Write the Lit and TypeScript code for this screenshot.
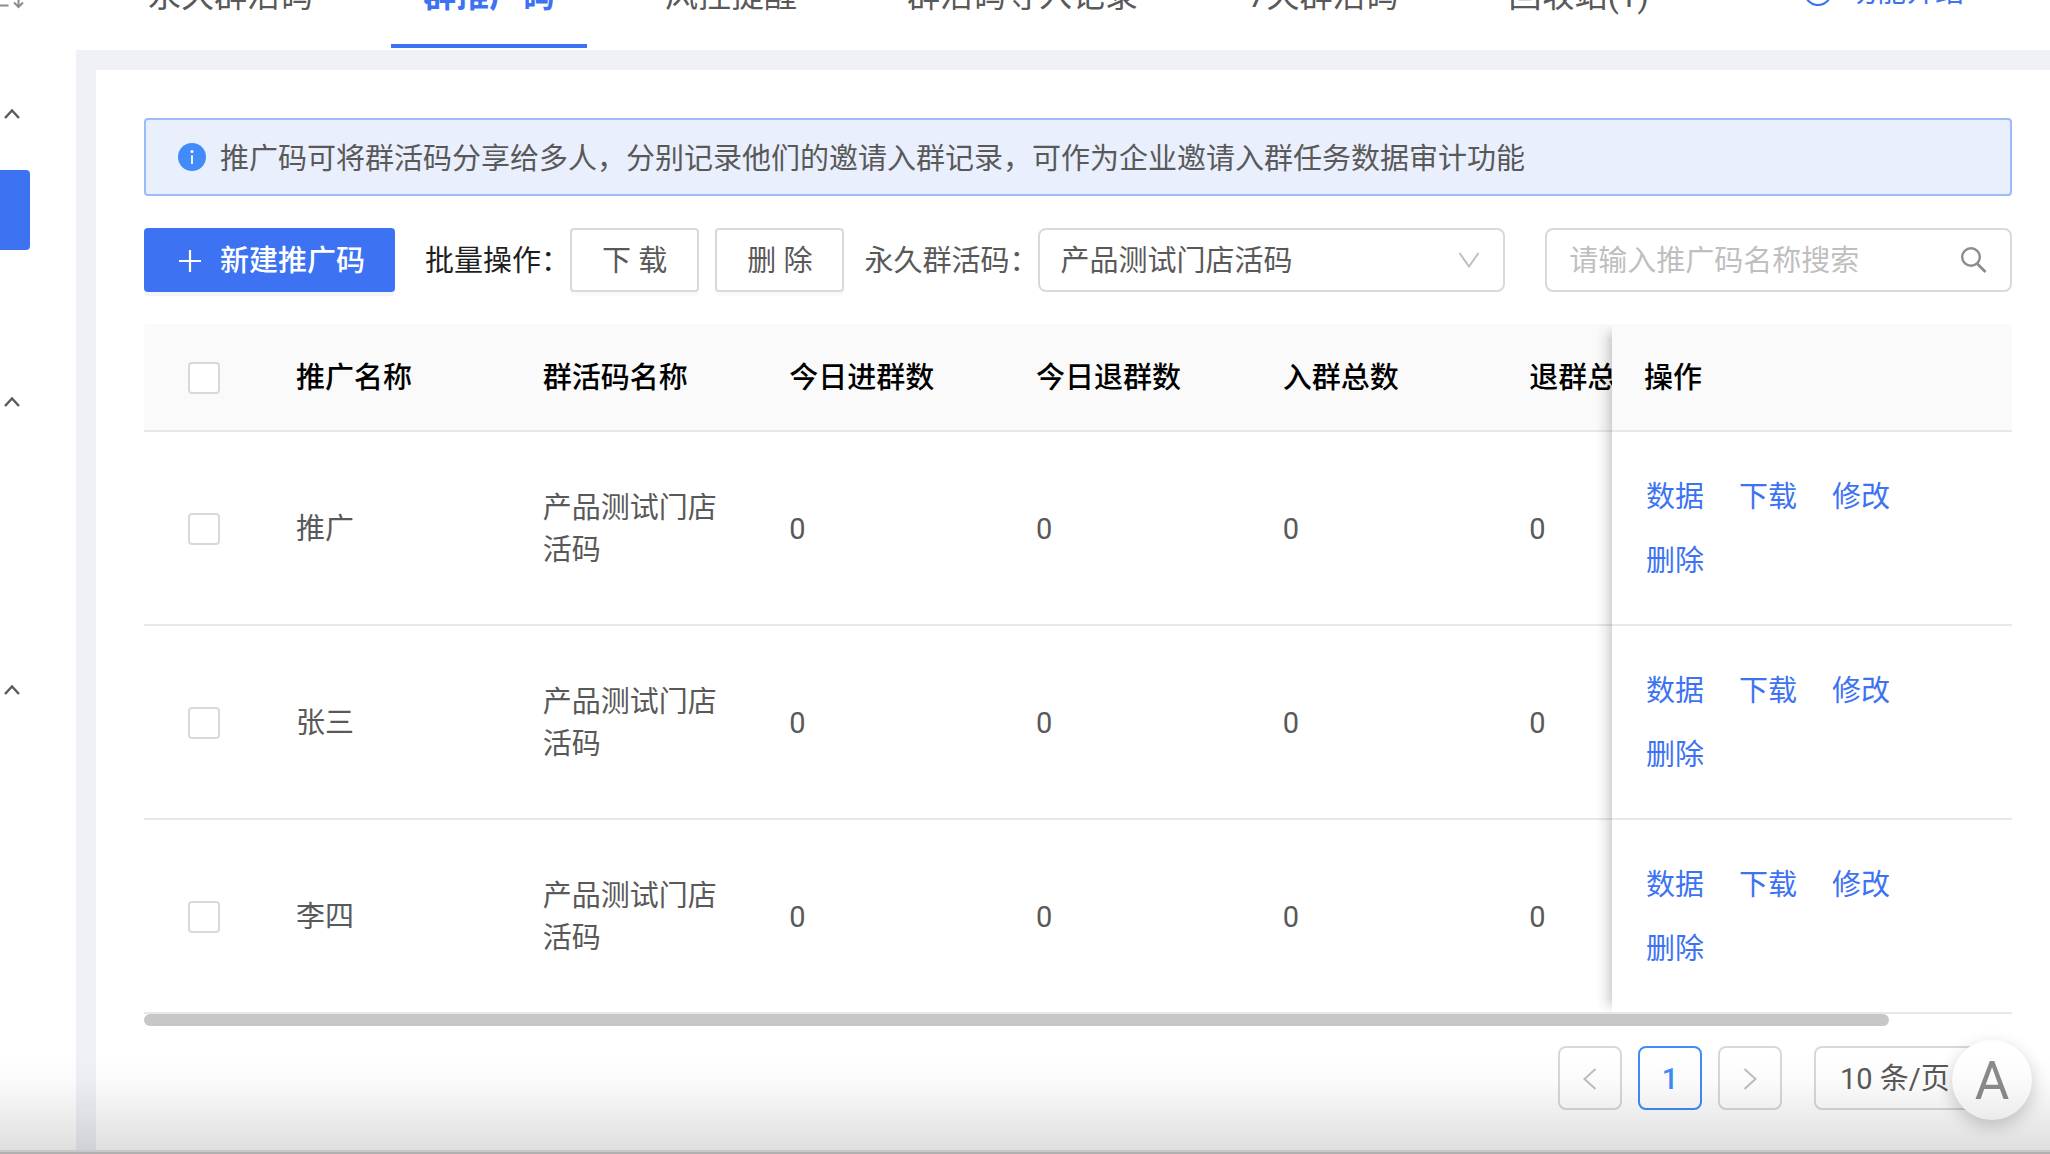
import { LitElement, html, css, svg } from "lit";
import { customElement, state } from "lit/decorators.js";

interface Row {
  name: string;
  code: string;
  counts: number[];
}

const TABS = ["永久群活码", "群推广码", "风控提醒", "群活码导入记录", "7天群活码", "回收站(1)"];
const COLUMNS = ["推广名称", "群活码名称", "今日进群数", "今日退群数", "入群总数", "退群总数"];
const ACTIONS = ["数据", "下载", "修改", "删除"];
const ROWS: Row[] = ["推广", "张三", "李四"].map((name) => ({
  name,
  code: "产品测试门店活码",
  counts: [0, 0, 0, 0],
}));

const stroke = (d: string, w: number, size: number, cls = "") => html`<svg
  class="icon ${cls}" width=${size} height=${size} viewBox="0 0 28 28" aria-hidden="true">
  ${svg`<path d=${d} fill="none" stroke="currentColor" stroke-width=${w}></path>`}
</svg>`;

@customElement("app-root")
export class AppRoot extends LitElement {
  @state() private activeTab = 1;

  static styles = css`
    :host {
      --blue: #3d73f3;
      --text: #595959;
      --line: #d9d9d9;
      display: block;
      color: var(--text);
      font: 29px/42px Roboto, "Noto Sans CJK SC", sans-serif;
    }
    * { box-sizing: border-box; }
    button, input, select { font: inherit; color: inherit; margin: 0; }
    button { cursor: pointer; white-space: nowrap; }
    a { color: var(--blue); text-decoration: none; }
    .icon { display: block; flex: none; }

    .shell {
      display: flex;
      min-height: 100vh;
      max-height: 100vh;
      overflow: hidden;
      background: #fff;
    }
    .sidebar {
      display: flex;
      flex: none;
      flex-direction: column;
      gap: 16px;
      width: 76px;
    }
    .sort { height: 58px; color: #8c8c8c; }
    .item { display: flex; align-items: center; flex: none; width: 30px; height: 80px; }
    .item.active { background: var(--blue); border-radius: 0 4px 4px 0; }
    .toggle { padding: 0; border: 0; background: none; justify-content: center; padding-right: 6px; }

    .main { flex: 1; min-width: 0; background: #f0f1f6; }
    .header {
      display: flex;
      align-items: flex-end;
      height: 50px;
      padding: 0 86px 2px 40px;
      overflow: hidden;
      background: #fff;
    }
    .tabs { display: flex; gap: 46px; }
    .tab {
      padding: 0 32px 23px;
      border: 0;
      border-bottom: 4px solid transparent;
      background: none;
      font-size: 33px;
      line-height: 50px;
    }
    .tab.active { color: var(--blue); border-color: var(--blue); font-weight: 700; }
    .intro {
      display: flex;
      align-items: center;
      gap: 16px;
      margin-left: auto;
      padding-bottom: 35px;
    }

    .card { margin: 20px 0 0 20px; padding: 48px 38px 44px 48px; min-height: 100%; background: #fff; }
    .alert {
      display: flex;
      align-items: center;
      gap: 14px;
      padding: 14px 32px;
      border: 2px solid #9bbcfb;
      border-radius: 4px;
      background: #e9effc;
    }
    .alert span { padding-top: 4px; }
    .toolbar { display: flex; align-items: center; margin: 32px 0; }
    .btn {
      display: flex;
      align-items: center;
      justify-content: center;
      flex: none;
      min-width: 128px;
      height: 64px;
      padding: 2px 30px 0;
      border: 2px solid var(--line);
      border-radius: 4px;
      background: #fff;
      box-shadow: 0 4px 0 rgba(0, 0, 0, 0.02);
    }
    .btn + .btn { margin-left: 16px; }
    .btn.primary {
      gap: 16px;
      margin-right: 30px;
      padding-left: 32px;
      border: 0;
      background: var(--blue);
      color: #fff;
      font-weight: 500;
      box-shadow: 0 4px 0 rgba(0, 0, 0, 0.04);
    }
    .label { flex: none; padding-top: 2px; }
    .label.strong { color: #1f1f1f; }
    .btn + .label.code { margin-left: 20px; }
    .field {
      display: flex;
      align-items: center;
      flex: 1;
      min-width: 0;
      height: 64px;
      padding-right: 20px;
      border: 2px solid var(--line);
      border-radius: 8px;
      background: #fff;
    }
    .field + .field { margin-left: 40px; }
    .field select, .field input {
      flex: 1;
      min-width: 0;
      height: 100%;
      padding: 2px 0 0 22px;
      border: 0;
      outline: 0;
      appearance: none;
      background: none;
    }
    .toolbar .field select { padding-left: 20px; }
    .field input::placeholder { color: #bfbfbf; opacity: 1; }
    .pale { color: #bfbfbf; }
    .gray { color: #8c8c8c; }

    .table-scroll { overflow-x: auto; scrollbar-width: none; border-radius: 4px 4px 0 0; }
    table {
      width: 100%;
      min-width: 2000px;
      table-layout: fixed;
      border-collapse: separate;
      border-spacing: 0;
      text-align: left;
    }
    th, td { padding: 33px 32px 31px; border-bottom: 2px solid #e8e8e8; background: #fff; font-weight: 400; }
    th { background: #fafafa; color: #000; font-weight: 500; }
    .pick { width: 120px; padding-left: 44px; padding-right: 44px; }
    .ops { position: sticky; right: 0; width: 400px; }
    .ops::before {
      content: "";
      position: absolute;
      top: 0;
      right: 100%;
      bottom: -2px;
      width: 16px;
      background: linear-gradient(to left, rgba(0, 0, 0, 0.16), rgba(0, 0, 0, 0.05) 50%, rgba(0, 0, 0, 0));
      pointer-events: none;
    }
    th.ops::before { mask-image: linear-gradient(transparent, #000 16px); }
    tr:last-child > td.ops::before { mask-image: linear-gradient(to top, transparent, #000 16px); }
    .checkbox {
      display: block;
      width: 32px;
      height: 32px;
      margin: 0;
      appearance: none;
      border: 2px solid var(--line);
      border-radius: 4px;
      background: #fff;
    }
    .links { display: flex; flex-wrap: wrap; column-gap: 31px; line-height: 64px; }
    .links a { padding: 0 2px; }
    .track { height: 12px; }
    .thumb { width: 93.4%; height: 12px; border-radius: 6px; background: #c7c7c7; }

    .pager { display: flex; justify-content: flex-end; gap: 16px; margin-top: 20px; }
    .page {
      display: flex;
      align-items: center;
      justify-content: center;
      width: 64px;
      height: 64px;
      padding: 2px 0 0;
      border: 2px solid var(--line);
      border-radius: 8px;
      background: #fff;
    }
    .page.current { border-color: #418cf8; color: #418cf8; font-weight: 500; }
    .pager .field { flex: none; width: 198px; margin-left: 16px; }
    .pager .field select { padding-left: 24px; }
    .assist {
      position: fixed;
      right: 18px;
      bottom: 34px;
      width: 80px;
      height: 80px;
      padding: 2px 0 0;
      border: 0;
      border-radius: 50%;
      background: #fff;
      color: #8c8c8c;
      font-size: 53px;
      line-height: 78px;
      box-shadow: 0 6px 18px rgba(0, 0, 0, 0.2);
    }
    .fade {
      position: fixed;
      left: 0;
      right: 0;
      bottom: 0;
      height: 100px;
      border-bottom: 2px solid #b0b0b0;
      box-shadow: inset 0 -2px 0 #c8c8c8;
      background: linear-gradient(rgba(0, 0, 0, 0), rgba(0, 0, 0, 0.02) 30%, rgba(0, 0, 0, 0.13));
      pointer-events: none;
    }
  `;

  private chevronToggle() {
    return html`<button class="item toggle" aria-label="收起">
      ${stroke("M7 18L14 10.5L21 18", 2.4, 28)}
    </button>`;
  }

  private sidebar() {
    return html`<nav class="sidebar">
      <svg class="icon sort" width="30" height="58" viewBox="0 0 30 58" aria-hidden="true">
        <path d="M0 5.5H8.5M18.5 0V7M14 2.5L18.5 7L23 2.5" fill="none" stroke="currentColor" stroke-width="2"></path>
      </svg>
      ${this.chevronToggle()}
      <a class="item active" href="#" aria-label="群活码"></a>
      <div class="item"></div>
      ${this.chevronToggle()}
      <div class="item"></div>
      <div class="item"></div>
      ${this.chevronToggle()}
    </nav>`;
  }

  private row(r: Row) {
    return html`<tr>
      <td class="pick"><input class="checkbox" type="checkbox" aria-label=${r.name} /></td>
      <td>${r.name}</td>
      <td>${r.code}</td>
      ${r.counts.map((n) => html`<td>${n}</td>`)}
      <td class="ops"><div class="links">${ACTIONS.map((a) => html`<a href="#">${a}</a>`)}</div></td>
    </tr>`;
  }

  render() {
    return html`<div class="shell">
      ${this.sidebar()}
      <div class="main">
        <header class="header">
          <div class="tabs" role="tablist">
            ${TABS.map((t, i) => html`<button
              role="tab"
              class="tab ${i === this.activeTab ? "active" : ""}"
              aria-selected=${i === this.activeTab}
              @click=${() => (this.activeTab = i)}
            >${t}</button>`)}
          </div>
          <a class="intro" href="#">
            <svg class="icon" width="28" height="28" viewBox="0 0 28 28" aria-hidden="true">
              <circle cx="14" cy="14" r="13" fill="none" stroke="currentColor" stroke-width="2.2"></circle>
            </svg>功能介绍</a>
        </header>
        <main class="card">
          <div class="alert" role="note">
            <svg class="icon" width="28" height="28" viewBox="0 0 28 28" aria-hidden="true">
              <circle cx="14" cy="14" r="14" fill="#418cf8"></circle>
              <circle cx="14" cy="8.6" r="1.5" fill="#fff"></circle>
              <path d="M14 12.2V21" stroke="#fff" stroke-width="1.8"></path>
            </svg>
            <span>推广码可将群活码分享给多人，分别记录他们的邀请入群记录，可作为企业邀请入群任务数据审计功能</span>
          </div>
          <div class="toolbar">
            <button class="btn primary">${stroke("M14 3V25M3 14H25", 2.2, 28)}新建推广码</button>
            <span class="label strong">批量操作：</span>
            <button class="btn">下 载</button>
            <button class="btn">删 除</button>
            <label class="label code" for="code">永久群活码：</label>
            <div class="field">
              <select id="code"><option>产品测试门店活码</option></select>
              ${stroke("M4.5 7L14 20.5L23.5 7", 2, 28, "pale")}
            </div>
            <div class="field">
              <input type="text" aria-label="推广码名称" placeholder="请输入推广码名称搜索" />
              <svg class="icon gray" width="32" height="28" viewBox="0 0 32 28" aria-hidden="true">
                <circle cx="13" cy="11" r="8.8" fill="none" stroke="currentColor" stroke-width="2.4"></circle>
                <path d="M19 17.5L27.5 26" stroke="currentColor" stroke-width="2.8"></path>
              </svg>
            </div>
          </div>
          <div class="table-scroll">
            <table>
              <thead>
                <tr>
                  <th class="pick"><input class="checkbox" type="checkbox" aria-label="全选" /></th>
                  ${COLUMNS.map((c) => html`<th>${c}</th>`)}
                  <th class="ops">操作</th>
                </tr>
              </thead>
              <tbody>${ROWS.map((r) => this.row(r))}</tbody>
            </table>
          </div>
          <div class="track"><div class="thumb"></div></div>
          <div class="pager">
            <button class="page pale" aria-label="上一页">${stroke("M19.5 4L8.5 14L19.5 24", 2, 28)}</button>
            <button class="page current">1</button>
            <button class="page pale" aria-label="下一页">${stroke("M8.5 4L19.5 14L8.5 24", 2, 28)}</button>
            <div class="field">
              <select aria-label="每页条数"><option>10 条/页</option></select>
              ${stroke("M4.5 7L14 20.5L23.5 7", 2, 28, "pale")}
            </div>
          </div>
        </main>
      </div>
      <button class="assist" aria-label="助手">A</button>
      <div class="fade"></div>
    </div>`;
  }
}
